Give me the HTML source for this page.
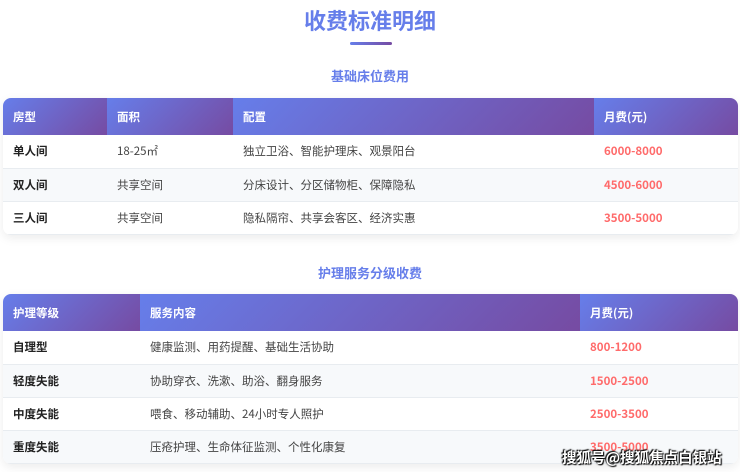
<!DOCTYPE html>
<html><head><meta charset="utf-8"><style>
*{margin:0;padding:0;box-sizing:border-box}
body{width:740px;height:472px;overflow:hidden;background:#fff;font-family:"Noto Sans CJK SC","Liberation Sans",sans-serif;position:relative}
h1{position:absolute;top:5px;left:0;width:740px;text-align:center;font-size:22px;font-weight:bold;color:#667eea;line-height:30px}
.ul{position:absolute;top:42px;left:350px;width:42px;height:3px;background:linear-gradient(90deg,#667eea,#764ba2);border-radius:2px}
h2{position:absolute;left:0;width:740px;text-align:center;font-size:13px;font-weight:bold;color:#667eea;line-height:18px}
table{position:absolute;left:3px;width:735px;border-collapse:collapse;border-radius:8px;overflow:hidden;box-shadow:0 3px 10px rgba(0,0,0,.08);font-size:11.5px}
th{background:linear-gradient(135deg,#667eea,#764ba2);color:#fff;text-align:left;font-weight:bold;height:37px;padding:0 10px}
td{height:33px;padding:0 10px;color:#444;border-bottom:1px solid #e8ecf0;line-height:16px}
tr:nth-child(odd) td{background:#f7f9fb}
td.b{font-weight:bold;color:#222}
td.p{color:#ff6b6b;font-weight:bold}
.wm{position:absolute;left:562px;top:447px;font-size:14.5px;font-weight:bold;color:#fff;text-shadow:0 0 2px #000,1px 1px 1px #000,-1px -1px 1px #000}
</style></head><body>
<h1>收费标准明细</h1>
<div class="ul"></div>
<h2 style="top:67px">基础床位费用</h2>
<table style="top:98px">
<tr><th style="width:104px">房型</th><th style="width:126px">面积</th><th style="width:361px">配置</th><th>月费(元)</th></tr>
<tr><td class="b">单人间</td><td>18-25㎡</td><td>独立卫浴、智能护理床、观景阳台</td><td class="p">6000-8000</td></tr>
<tr><td class="b">双人间</td><td>共享空间</td><td>分床设计、分区储物柜、保障隐私</td><td class="p">4500-6000</td></tr>
<tr><td class="b">三人间</td><td>共享空间</td><td>隐私隔帘、共享会客区、经济实惠</td><td class="p">3500-5000</td></tr>
</table>
<h2 style="top:264px">护理服务分级收费</h2>
<table style="top:294px">
<tr><th style="width:137px">护理等级</th><th style="width:440px">服务内容</th><th>月费(元)</th></tr>
<tr><td class="b">自理型</td><td>健康监测、用药提醒、基础生活协助</td><td class="p">800-1200</td></tr>
<tr><td class="b">轻度失能</td><td>协助穿衣、洗漱、助浴、翻身服务</td><td class="p">1500-2500</td></tr>
<tr><td class="b">中度失能</td><td>喂食、移动辅助、24小时专人照护</td><td class="p">2500-3500</td></tr>
<tr><td class="b">重度失能</td><td>压疮护理、生命体征监测、个性化康复</td><td class="p">3500-5000</td></tr>
</table>
<div class="wm">搜狐号@搜狐焦点白银站</div>
</body></html>
